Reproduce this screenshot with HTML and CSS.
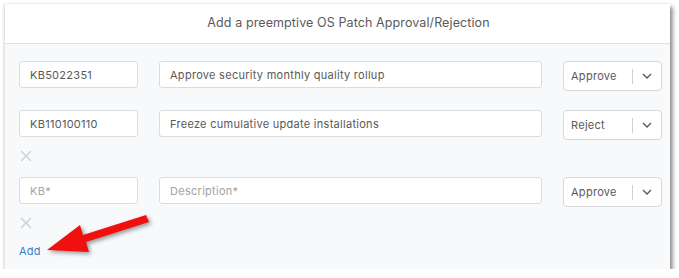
FILE: index.html
```html
<!DOCTYPE html>
<html lang="en">
<head>
  <meta charset="UTF-8">
  <title>OS Patch Approval</title>
  <link rel="stylesheet" href="styles.css">
</head>
<body>

<div class="panel">
  <div class="panel-header">Add a preemptive OS Patch Approval/Rejection</div>

  <div class="panel-body">
    <div class="row">
      <div class="fields">
        <input class="kb" type="text" value="KB5022351" placeholder="KB*">
        <input class="desc" type="text" value="Approve security monthly quality rollup" placeholder="Description*">
        <div class="select">
          <span class="select-value">Approve</span>
          <span class="select-sep"></span>
          <svg class="chevron" width="10" height="6" viewBox="0 0 10 6"><path d="M1 1 L5 5 L9 1" fill="none" stroke="#555" stroke-width="1.3"/></svg>
        </div>
      </div>
    </div>

    <div class="row">
      <div class="fields">
        <input class="kb" type="text" value="KB110100110" placeholder="KB*">
        <input class="desc" type="text" value="Freeze cumulative update installations" placeholder="Description*">
        <div class="select">
          <span class="select-value">Reject</span>
          <span class="select-sep"></span>
          <svg class="chevron" width="10" height="6" viewBox="0 0 10 6"><path d="M1 1 L5 5 L9 1" fill="none" stroke="#555" stroke-width="1.3"/></svg>
        </div>
      </div>
      <svg class="remove" width="12" height="12" viewBox="0 0 12 12"><path d="M1 1 L11 11 M11 1 L1 11" stroke="#cfcfcf" stroke-width="1.4"/></svg>
    </div>

    <div class="row">
      <div class="fields">
        <input class="kb" type="text" placeholder="KB*">
        <input class="desc" type="text" placeholder="Description*">
        <div class="select">
          <span class="select-value">Approve</span>
          <span class="select-sep"></span>
          <svg class="chevron" width="10" height="6" viewBox="0 0 10 6"><path d="M1 1 L5 5 L9 1" fill="none" stroke="#555" stroke-width="1.3"/></svg>
        </div>
      </div>
      <svg class="remove" width="12" height="12" viewBox="0 0 12 12"><path d="M1 1 L11 11 M11 1 L1 11" stroke="#cfcfcf" stroke-width="1.4"/></svg>
    </div>

    <a class="add-link" href="#">Add</a>
  </div>
</div>

<!-- annotation arrow -->
<svg class="arrow" width="679" height="278" viewBox="0 0 679 278">
  <polygon points="47,250 80,225 83,235 146,215 149,222 86,242 89,252" fill="#f01010"/>
</svg>

</body>
</html>
```

FILE: styles.css
```css
body {
  margin: 0;
  background: #fff;
  font-family: Inter, "Noto Sans", Arial, sans-serif;
}
.panel {
  margin: 4px 0 0 4px;
  width: 666px;
  height: 265px;
  background: #f8f9fb;
  border-left: 1px solid #e2e2e2;
  box-sizing: border-box;
  box-shadow: 0 0 3px rgba(0,0,0,0.12), 3px 3px 4px rgba(0,0,0,0.4);
}
.panel-header {
  height: 40px;
  line-height: 38px;
  padding-left: 22px;
  background: #fff;
  border-bottom: 1px solid #dfe1e4;
  box-sizing: border-box;
  text-align: center;
  font-size: 12.5px;
  letter-spacing: 0.1px;
  color: #5a5a5a;
}
.panel-body {
  padding: 17px 8px 0 14px;
}
.row {
  margin-bottom: 19px;
}
.row:nth-child(2) {
  margin-bottom: 15px;
}
.fields {
  display: flex;
  align-items: flex-start;
}
.fields input {
  height: 27px;
  box-sizing: border-box;
  border: 1px solid #dcdcdc;
  border-radius: 3px;
  background: #fff;
  padding: 0 10px;
  font-family: inherit;
  font-size: 11px;
  letter-spacing: 0.28px;
  color: #595959;
  outline: none;
}
.fields input::placeholder {
  color: #a3a3a3;
}
.kb {
  width: 119px;
  margin-right: 21px;
}
.desc {
  width: 383px;
  margin-right: 21px;
}
.select {
  width: 99px;
  height: 30px;
  box-sizing: border-box;
  border: 1px solid #d8d8d8;
  border-radius: 4px;
  background: #fff;
  display: flex;
  align-items: center;
  font-size: 11px;
  letter-spacing: 0.28px;
  color: #595959;
}
.select-value {
  padding-left: 7px;
  width: 61px;
}
.select-sep {
  width: 1px;
  height: 15px;
  background: #d0d0d0;
}
.chevron {
  margin-left: 9px;
}
.remove {
  display: block;
  margin: 10px 0 0 1px;
}
.add-link {
  display: block;
  margin-top: -5px;
  font-size: 11px;
  letter-spacing: 0.2px;
  color: #3a7fc4;
  text-decoration: none;
  line-height: 16px;
}
.arrow {
  position: absolute;
  left: 0;
  top: 0;
  filter: drop-shadow(2px 2px 2px rgba(0,0,0,0.4));
}
```
